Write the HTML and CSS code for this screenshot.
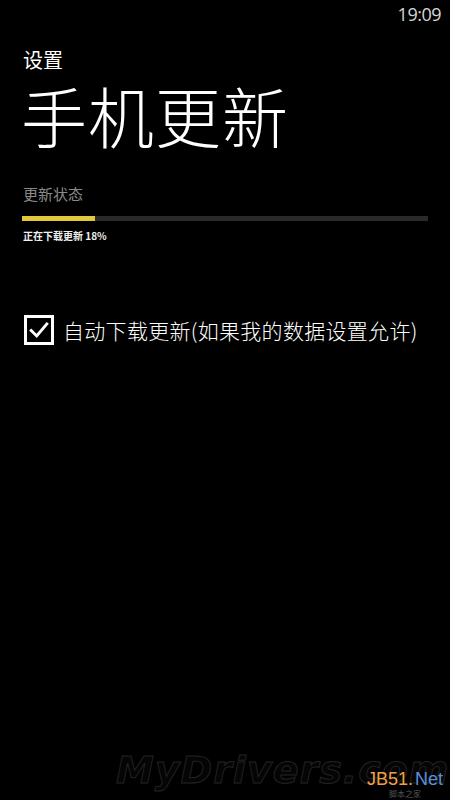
FILE: index.html
```html
<!DOCTYPE html>
<html lang="zh-CN">
<head>
  <meta charset="UTF-8">
  <meta name="viewport" content="width=device-width, initial-scale=1.0">
  <title>手机更新</title>
  <link rel="stylesheet" href="styles.css">
</head>
<body>
  <div class="phone">
    <div class="status-bar">
      <span class="clock">19:09</span>
    </div>

    <header class="page-head">
      <p class="app-name">设置</p>
      <h1 class="page-title">手机更新</h1>
    </header>

    <section class="update-status">
      <p class="status-label">更新状态</p>
      <div class="progress">
        <div class="progress-fill" style="width: 18%;"></div>
      </div>
      <p class="status-text">正在下载更新 18%</p>
    </section>

    <label class="option">
      <span class="check-box">
        <svg viewBox="0 0 24 24" width="22" height="22">
          <path d="M3.5 12.5 L9.5 18.5 L20.5 5.5" fill="none" stroke="#fff" stroke-width="3.2" stroke-linecap="square"/>
        </svg>
      </span>
      <span class="option-text">自动下载更新(如果我的数据设置允许)</span>
    </label>

    <!-- watermarks from the original screenshot -->
    <div class="watermark">MyDrivers.com</div>
    <div class="site-mark">
      <span class="jb">JB51</span><span class="dot">.</span><span class="net">Net</span>
      <span class="site-sub">脚本之家</span>
    </div>
  </div>
</body>
</html>
```

FILE: styles.css
```css
* {
  margin: 0;
  padding: 0;
  box-sizing: border-box;
}

body {
  background: #000;
  color: #fff;
  font-family: "Segoe UI", "Open Sans", "Noto Sans CJK SC", sans-serif;
}

.phone {
  position: relative;
  width: 450px;
  height: 800px;
  overflow: hidden;
  background: #000;
}

/* Status bar */
.status-bar {
  display: flex;
  justify-content: flex-end;
  height: 30px;
  padding: 2px 9px 0 0;
}

.clock {
  font-family: "Open Sans", sans-serif;
  font-size: 18px;
  color: #d6d6d6;
  letter-spacing: -0.5px;
}

/* Header */
.page-head {
  padding: 18px 0 0 23px;
}

.app-name {
  font-family: "Noto Sans CJK SC", sans-serif;
  font-size: 20px;
  line-height: 24px;
  color: #fff;
}

.page-title {
  font-family: "Noto Sans CJK SC", sans-serif;
  font-weight: 300;
  font-size: 66px;
  line-height: 80px;
  margin-top: 2px;
  margin-left: -2px;
  letter-spacing: 1px;
}

/* Update status */
.update-status {
  padding: 30px 22px 0 23px;
}

.status-label {
  font-family: "Noto Sans CJK SC", sans-serif;
  font-size: 15px;
  line-height: 20px;
  color: #8a8a8a;
}

.progress {
  height: 5px;
  margin-top: 12px;
  margin-left: -1px;
  background: #2a2a2a;
}

.progress-fill {
  height: 100%;
  background: #e2c93c;
}

.status-text {
  font-family: "Noto Sans CJK SC", sans-serif;
  font-size: 10px;
  font-weight: 700;
  line-height: 14px;
  margin-top: 8px;
  color: #f0f0f0;
}

/* Option */
.option {
  display: flex;
  align-items: center;
  gap: 9px;
  margin: 72px 0 0 24px;
}

.check-box {
  display: flex;
  align-items: center;
  justify-content: center;
  flex-shrink: 0;
  width: 30px;
  height: 30px;
  border: 3px solid #fff;
}

.option-text {
  font-family: "Noto Sans CJK SC", sans-serif;
  font-weight: 300;
  font-size: 21px;
  line-height: 30px;
  letter-spacing: 0.3px;
  white-space: nowrap;
}

/* Watermarks */
.watermark {
  position: absolute;
  left: 116px;
  top: 748px;
  font-family: "DejaVu Sans", sans-serif;
  font-weight: 700;
  font-style: italic;
  font-size: 38px;
  color: #050505;
  -webkit-text-stroke: 1px #222;
  letter-spacing: 1px;
}

.site-mark {
  position: absolute;
  right: 7px;
  top: 769px;
  font-family: "Liberation Sans", sans-serif;
  font-size: 18px;
  line-height: 21px;
  text-align: center;
}

.jb {
  color: #f0a040;
}

.dot {
  color: #f0a040;
}

.net {
  color: #5b8ed8;
  margin-left: 2px;
}

.site-sub {
  display: block;
  font-family: "Noto Sans CJK SC", sans-serif;
  font-size: 8px;
  line-height: 8px;
  color: #555;
}
```
